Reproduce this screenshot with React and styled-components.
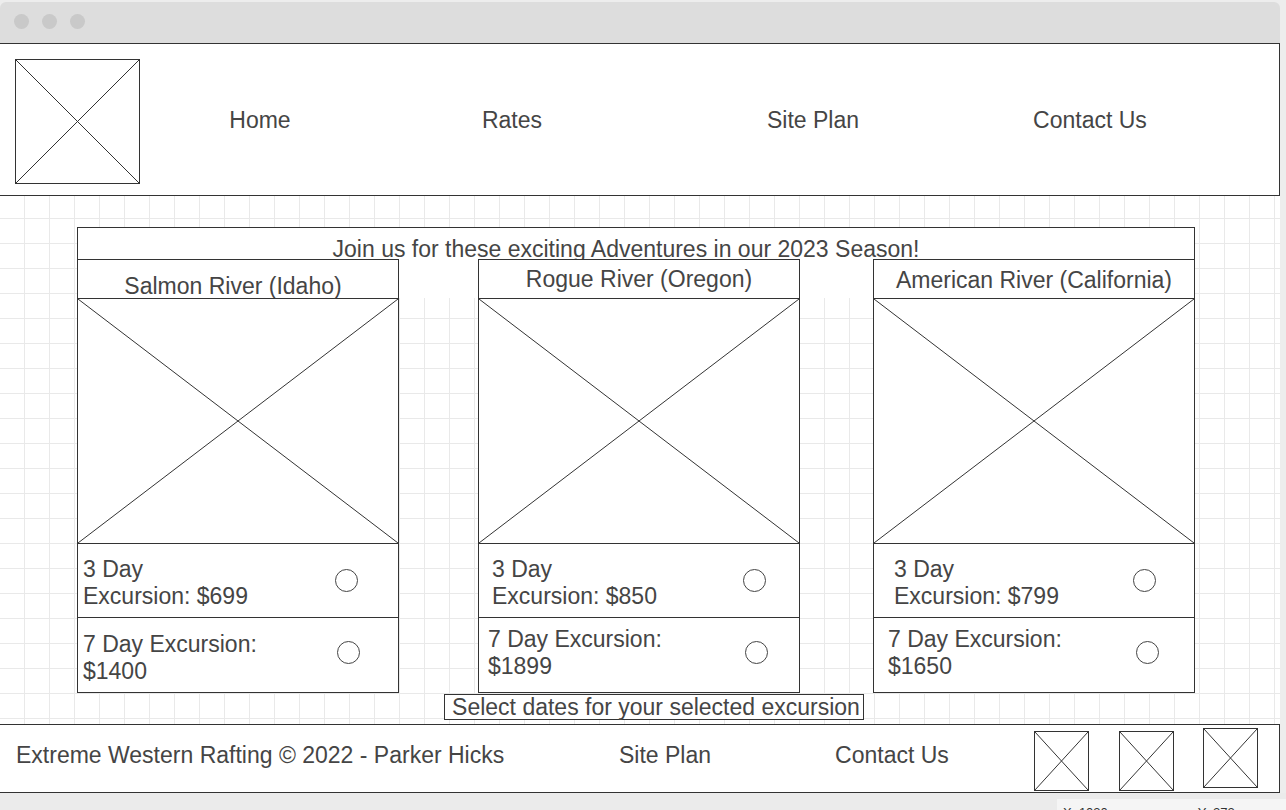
import React from 'react'
import styled, { createGlobalStyle } from 'styled-components'

const GlobalStyle = createGlobalStyle`
  html, body {
    margin: 0;
    padding: 0;
    background: #ededed;
    overflow: hidden;
  }
  body {
    font-family: "Liberation Sans", Arial, sans-serif;
    color: #454545;
  }
`

const Page = styled.div`
  width: 1286px;
  height: 810px;
  display: flex;
  flex-direction: column;
  overflow: hidden;
`
const Window = styled.div`
  width: 1280px;
  margin-top: 2px;
  display: flex;
  flex-direction: column;
  border-radius: 6px 6px 0 0;
  overflow: hidden;
`
const TitleBar = styled.div`
  height: 41px;
  background: #dddddd;
  border-bottom: 1px solid #333;
  display: flex;
  align-items: center;
  gap: 13px;
  padding-left: 14px;
  box-sizing: content-box;
`
const Dot = styled.span`
  width: 15px;
  height: 15px;
  border-radius: 50%;
  background: #c9c9c9;
  margin-top: -2px;
`
const Header = styled.header`
  height: 152px;
  box-sizing: border-box;
  background: #fff;
  border-bottom: 1px solid #333;
  border-right: 1px solid #333;
  display: flex;
  align-items: flex-start;
  padding: 15px 0 0 15px;
`
const XFrame = styled.div`
  width: ${p => p.$w}px;
  height: ${p => p.$h}px;
  box-sizing: border-box;
  border: 1px solid #333;
  background: #fff;
  flex-shrink: 0;
  margin-top: ${p => p.$top || 0}px;
  margin-left: ${p => p.$left || 0}px;
  > svg {
    display: block;
    width: 100%;
    height: 100%;
  }
`
const NavItem = styled.div`
  width: ${p => p.$w}px;
  margin-top: 48px;
  text-align: center;
  font-size: 23px;
  line-height: 26px;
`
const Canvas = styled.main`
  height: 529px;
  box-sizing: border-box;
  padding: 31px 0 0 77px;
  background-color: #fff;
  background-image:
    linear-gradient(to right, #e9e9e9 1px, transparent 1px),
    linear-gradient(to bottom, #e9e9e9 1px, transparent 1px);
  background-size: 25px 25px;
  background-position: 24px 22px;
  border-bottom: 1px solid #333;
`
const Panel = styled.section`
  width: 1118px;
  display: flex;
  flex-direction: column;
`
const Banner = styled.div`
  height: 71px;
  box-sizing: border-box;
  background: #fff;
  border: 1px solid #333;
  border-bottom: none;
  text-align: center;
  font-size: 23px;
  line-height: 26px;
  padding: 8px 20px 0 0;
  white-space: nowrap;
`
const CardRow = styled.div`
  display: flex;
  margin-top: -39px;
`
const Card = styled.article`
  width: 322px;
  box-sizing: border-box;
  border: 1px solid #333;
  background: #fff;
  margin-left: ${p => p.$ml}px;
  display: flex;
  flex-direction: column;
`
const CardTitle = styled.div`
  height: 38px;
  box-sizing: border-box;
  padding-top: ${p => p.$pt}px;
  padding-right: ${p => p.$pr || 0}px;
  text-align: center;
  font-size: 23px;
  line-height: 26px;
  white-space: nowrap;
`
const CardImage = styled.div`
  height: 245px;
  box-sizing: border-box;
  border-top: 1px solid #333;
  > svg {
    display: block;
    width: 100%;
    height: 100%;
  }
`
const OptionRow = styled.div`
  height: ${p => p.$h}px;
  box-sizing: border-box;
  border-top: 1px solid #333;
  display: flex;
  align-items: flex-start;
`
const OptionText = styled.div`
  padding-left: ${p => p.$pl}px;
  padding-top: ${p => p.$pt}px;
  font-size: 23px;
  line-height: 27px;
  white-space: nowrap;
`
const Radio = styled.span`
  width: 23px;
  height: 23px;
  box-sizing: border-box;
  border: 1px solid #444;
  border-radius: 50%;
  margin-left: auto;
  margin-right: ${p => p.$mr}px;
  margin-top: ${p => p.$mt}px;
`
const SelectButton = styled.button`
  width: 420px;
  height: 26px;
  margin: 1px 0 0 367px;
  padding: 0 0 0 4px;
  box-sizing: border-box;
  border: 1px solid #333;
  background: #fff;
  font-family: inherit;
  color: #454545;
  font-size: 23px;
  line-height: 24px;
  white-space: nowrap;
  text-align: center;
`
const Footer = styled.footer`
  height: 68px;
  box-sizing: border-box;
  background: #fff;
  border-bottom: 1px solid #333;
  border-right: 1px solid #333;
  display: flex;
  align-items: flex-start;
`
const FooterItem = styled.div`
  width: ${p => p.$w}px;
  padding-left: ${p => p.$pl || 0}px;
  padding-top: 17px;
  box-sizing: border-box;
  text-align: ${p => p.$align || 'center'};
  font-size: 23px;
  line-height: 26px;
  white-space: nowrap;
`
const StatusStrip = styled.div`
  flex: 1;
  background: #ebebeb;
  display: flex;
  justify-content: flex-end;
  overflow: hidden;
`
const Coords = styled.div`
  width: 229px;
  margin-top: 6px;
  height: 40px;
  background: #f5f5f5;
  display: flex;
  gap: 90px;
  padding: 6px 0 0 6px;
  box-sizing: border-box;
  font-size: 13px;
  color: #333;
`

const Placeholder = ({ w, h, top, left }) => (
  <XFrame $w={w} $h={h} $top={top} $left={left}>
    <svg viewBox="0 0 100 100" preserveAspectRatio="none">
      <line x1="0" y1="0" x2="100" y2="100" stroke="#333" strokeWidth="1" vectorEffect="non-scaling-stroke" />
      <line x1="100" y1="0" x2="0" y2="100" stroke="#333" strokeWidth="1" vectorEffect="non-scaling-stroke" />
    </svg>
  </XFrame>
)

const navLinks = [
  { label: 'Home', w: 240 },
  { label: 'Rates', w: 264 },
  { label: 'Site Plan', w: 338 },
  { label: 'Contact Us', w: 216 },
]

const trips = [
  {
    title: 'Salmon River (Idaho)', ml: 0, titleTop: 13, titleRight: 10,
    options: [
      { lines: ['3 Day', 'Excursion: $699'], pl: 5, pt: 11.5, mr: 40, mt: 25 },
      { lines: ['7 Day Excursion:', '$1400'], pl: 5, pt: 12.5, mr: 38, mt: 22.5 },
    ],
  },
  {
    title: 'Rogue River (Oregon)', ml: 79, titleTop: 6,
    options: [
      { lines: ['3 Day', 'Excursion: $850'], pl: 13, pt: 11.5, mr: 33, mt: 25 },
      { lines: ['7 Day Excursion:', '$1899'], pl: 9, pt: 7.5, mr: 31, mt: 22.5 },
    ],
  },
  {
    title: 'American River (California)', ml: 73, titleTop: 7,
    options: [
      { lines: ['3 Day', 'Excursion: $799'], pl: 20, pt: 11.5, mr: 38, mt: 25 },
      { lines: ['7 Day Excursion:', '$1650'], pl: 14, pt: 7.5, mr: 35, mt: 22.5 },
    ],
  },
]

const App = () => {
  return (
    <Page>
      <GlobalStyle />
      <Window>
        <TitleBar>
          <Dot /><Dot /><Dot />
        </TitleBar>
        <Header>
          <Placeholder w={125} h={125} />
          {navLinks.map(l => (
            <NavItem key={l.label} $w={l.w}>{l.label}</NavItem>
          ))}
        </Header>
        <Canvas>
          <Panel>
            <Banner>Join us for these exciting Adventures in our 2023 Season!</Banner>
            <CardRow>
              {trips.map(t => (
                <Card key={t.title} $ml={t.ml}>
                  <CardTitle $pt={t.titleTop} $pr={t.titleRight}>{t.title}</CardTitle>
                  <CardImage>
                    <svg viewBox="0 0 100 100" preserveAspectRatio="none">
                      <line x1="0" y1="0" x2="100" y2="100" stroke="#333" strokeWidth="1" vectorEffect="non-scaling-stroke" />
                      <line x1="100" y1="0" x2="0" y2="100" stroke="#333" strokeWidth="1" vectorEffect="non-scaling-stroke" />
                    </svg>
                  </CardImage>
                  {t.options.map((o, i) => (
                    <OptionRow key={i} $h={i === 0 ? 74 : 75}>
                      <OptionText $pl={o.pl} $pt={o.pt}>
                        {o.lines[0]}<br />{o.lines[1]}
                      </OptionText>
                      <Radio $mr={o.mr} $mt={o.mt} />
                    </OptionRow>
                  ))}
                </Card>
              ))}
            </CardRow>
            <SelectButton>Select dates for your selected excursion</SelectButton>
          </Panel>
        </Canvas>
        <Footer>
          <FooterItem $w={560} $pl={16} $align="left">Extreme Western Rafting © 2022 - Parker Hicks</FooterItem>
          <FooterItem $w={210}>Site Plan</FooterItem>
          <FooterItem $w={244}>Contact Us</FooterItem>
          <Placeholder w={55} h={60} top={6} left={20} />
          <Placeholder w={55} h={60} top={6} left={30} />
          <Placeholder w={55} h={60} top={3} left={29} />
        </Footer>
      </Window>
      <StatusStrip>
        <Coords>
          <span>X: 1030</span>
          <span>Y: 272</span>
        </Coords>
      </StatusStrip>
    </Page>
  )
}

export default App
